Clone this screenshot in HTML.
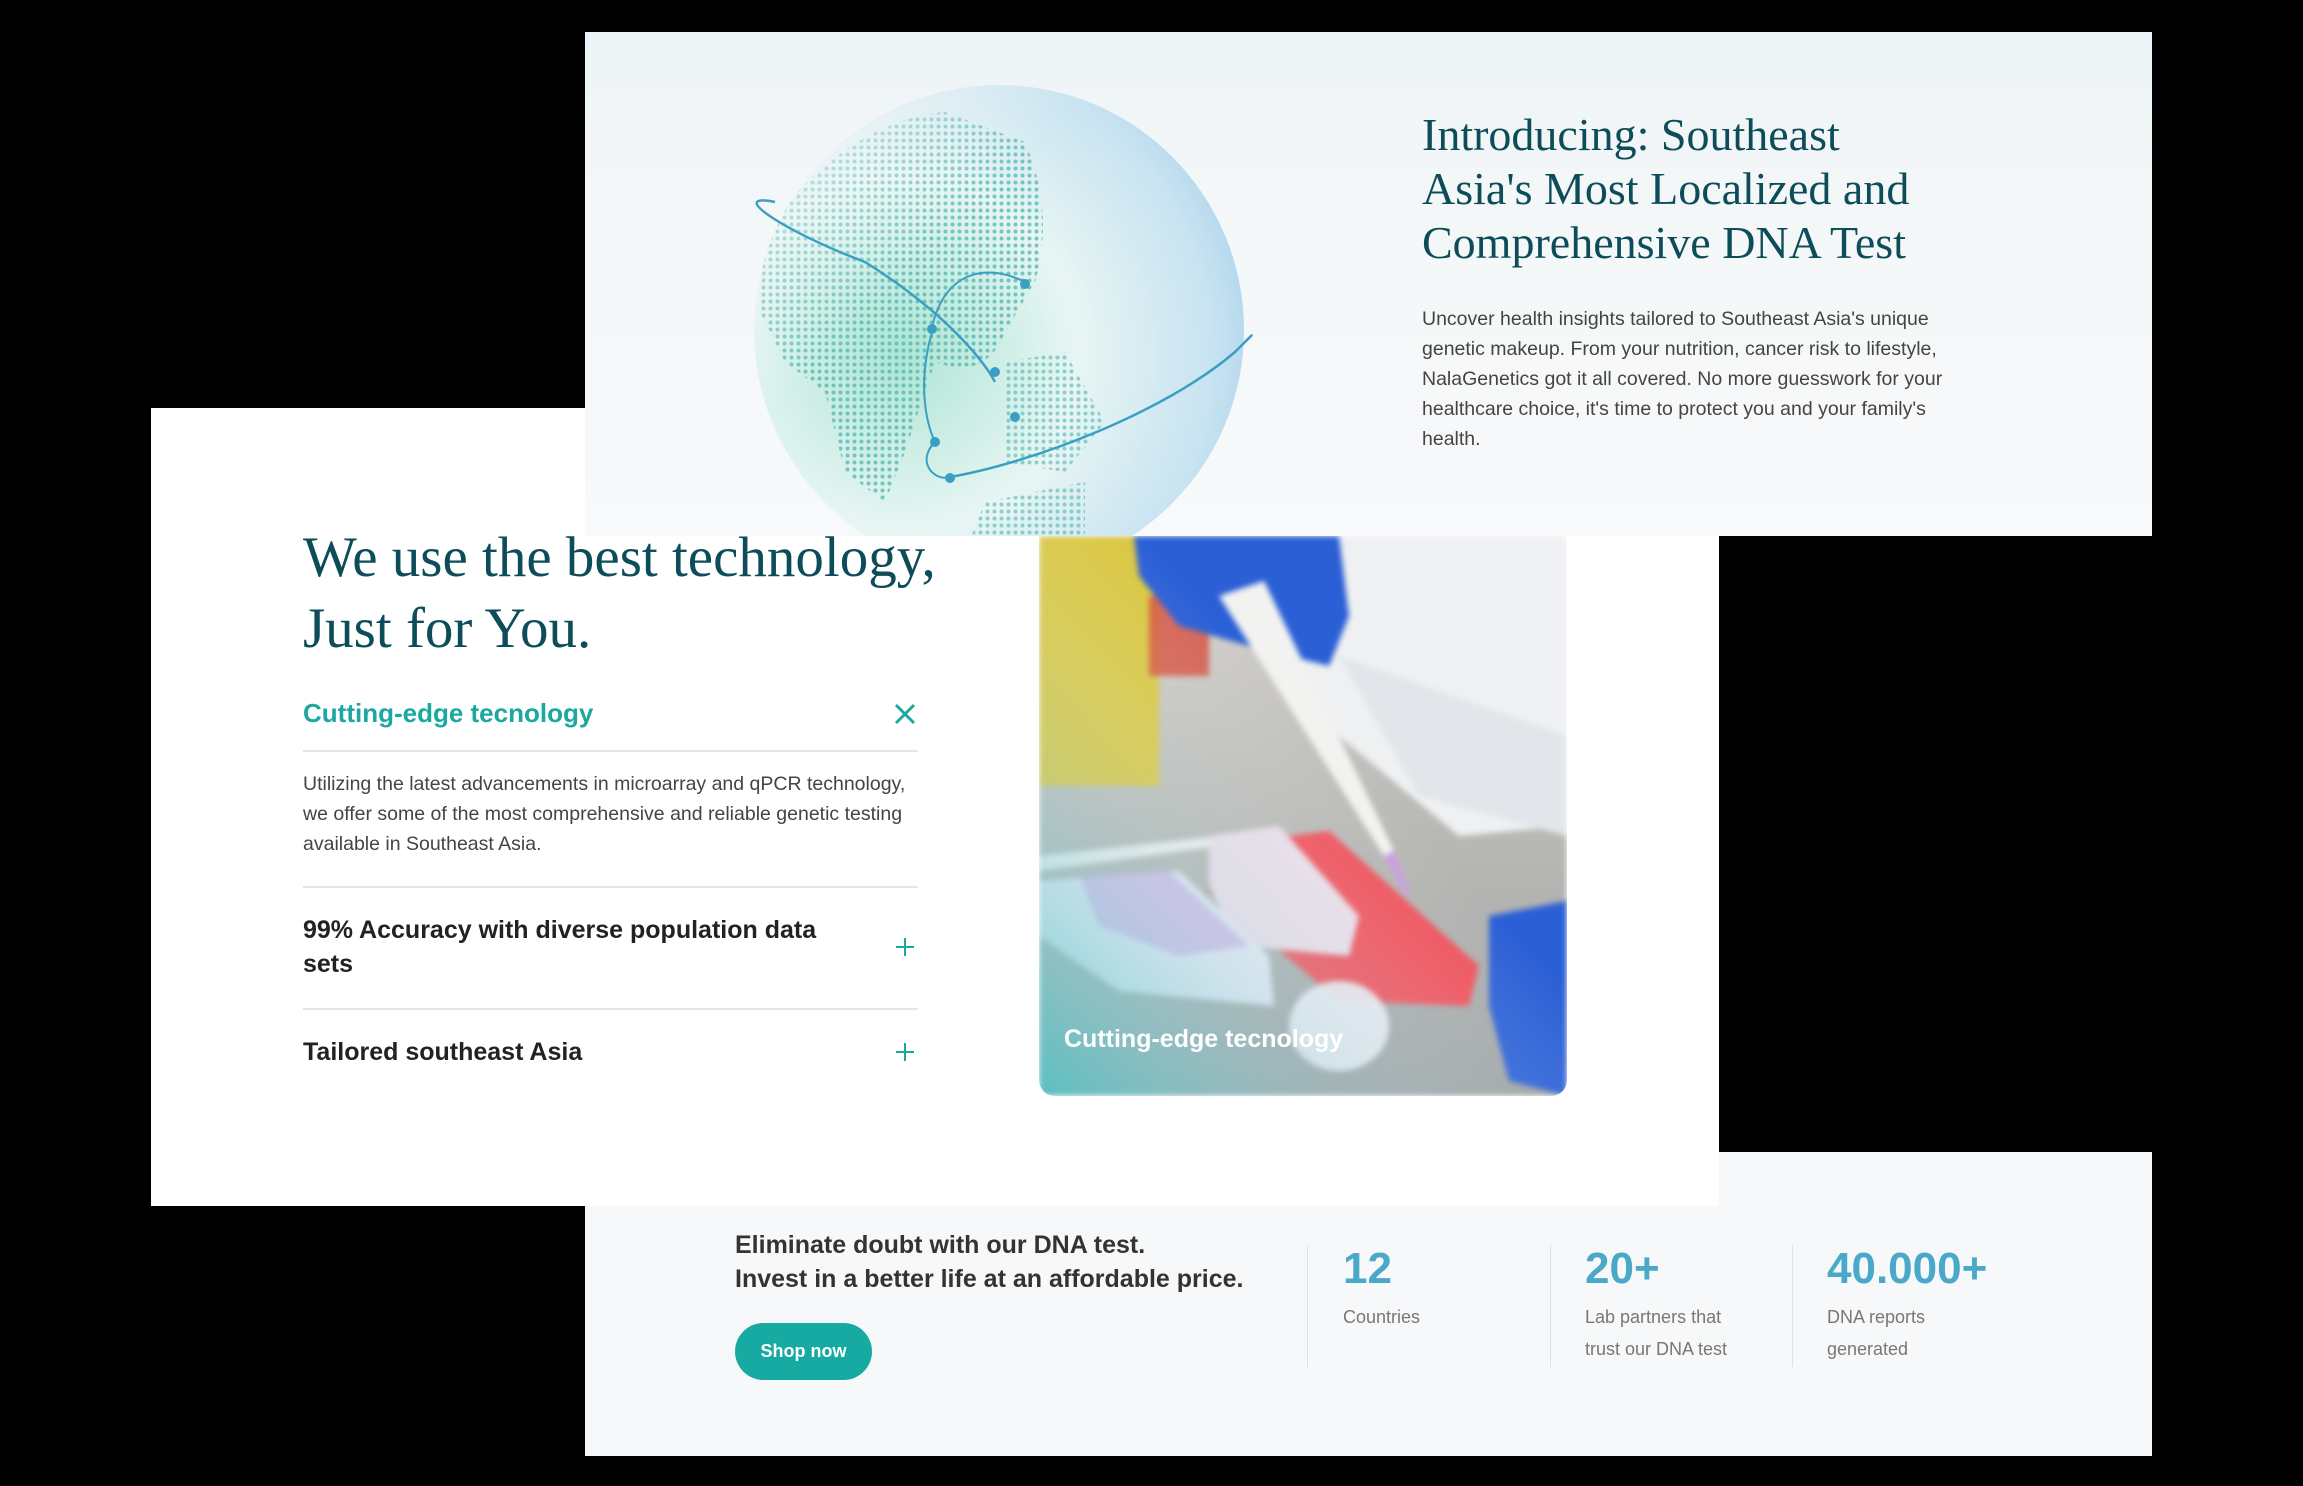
<!DOCTYPE html>
<html><head><meta charset="utf-8"><style>
*{margin:0;padding:0;box-sizing:border-box}
body{width:2303px;height:1486px;background:#000;position:relative;overflow:hidden;font-family:"Liberation Sans",sans-serif}
.abs{position:absolute}
.serif{font-family:"Liberation Serif",serif;color:#0d4d5a}
</style></head><body>
<div class="abs" style="left:585px;top:1152px;width:1567px;height:304px;background:#f6f8f9"></div>
<div class="abs" style="left:585px;top:32px;width:1567px;height:504px;background:linear-gradient(180deg,#edf3f6 0%,#f4f7f8 30%,#f7f9fa 100%);overflow:hidden">
 <svg class="abs" style="left:0;top:0" width="700" height="504">
  <defs>
   <radialGradient id="g1" cx="0.3" cy="0.55" r="0.8">
    <stop offset="0" stop-color="#a6e3d0"/><stop offset="0.45" stop-color="#e6f5f3"/><stop offset="0.8" stop-color="#c2e0f0"/><stop offset="1" stop-color="#96c9e8"/>
   </radialGradient>
   <linearGradient id="fade" x1="0" y1="0" x2="1" y2="1"><stop offset="0" stop-color="#f4f7f8" stop-opacity="0.9"/><stop offset="0.35" stop-color="#f4f7f8" stop-opacity="0"/></linearGradient>
   <pattern id="dots" width="7" height="7" patternUnits="userSpaceOnUse"><circle cx="3.5" cy="3.5" r="2" fill="#4fb8b0"/></pattern>
   <clipPath id="cc"><circle cx="414" cy="298" r="245"/></clipPath>
  </defs>
  <circle cx="414" cy="298" r="245" fill="url(#g1)" opacity="0.9"/>
  <g clip-path="url(#cc)" opacity="0.75">
   <path d="M180 200 Q260 90 360 80 L440 110 Q470 180 450 250 L420 300 Q400 350 350 330 L320 420 L300 470 L260 440 L240 360 L200 330 L175 280 Z" fill="url(#dots)"/>
   <path d="M420 330 L480 320 L520 390 L480 440 L420 430 Z" fill="url(#dots)" opacity="0.8"/>
   <path d="M400 470 L500 450 L500 520 L380 520 Z" fill="url(#dots)" opacity="0.8"/>
  </g>
  <circle cx="414" cy="298" r="246" fill="url(#fade)"/>
  <path d="M190 170 C140 160 200 200 280 230 C360 280 400 330 410 350" stroke="#3b9fc4" stroke-width="2.5" fill="none"/>
  <path d="M347 295 C360 240 400 230 440 250" stroke="#3b9fc4" stroke-width="2" fill="none"/>
  <path d="M347 300 C330 360 345 400 350 410" stroke="#3b9fc4" stroke-width="2" fill="none"/>
  <path d="M365 445 C450 430 580 380 650 320 C670 300 670 300 660 310" stroke="#3b9fc4" stroke-width="2.5" fill="none"/>
  <path d="M350 410 C330 430 350 450 365 445" stroke="#3b9fc4" stroke-width="2" fill="none"/>
  <g fill="#3b9fc4"><circle cx="347" cy="297" r="5"/><circle cx="410" cy="340" r="5"/><circle cx="440" cy="252" r="5"/><circle cx="350" cy="410" r="5"/><circle cx="365" cy="446" r="5"/><circle cx="430" cy="385" r="5"/></g>
 </svg>
 <div class="abs serif" style="left:837px;top:76px;font-size:46px;line-height:54px;width:500px">Introducing: Southeast Asia's Most Localized and Comprehensive DNA Test</div>
 <div class="abs" style="left:837px;top:272px;font-size:19.5px;line-height:30px;width:548px;color:#444">Uncover health insights tailored to Southeast Asia's unique genetic makeup. From your nutrition, cancer risk to lifestyle, NalaGenetics got it all covered. No more guesswork for your healthcare choice, it's time to protect you and your family's health.</div>
</div>
<div class="abs" style="left:151px;top:408px;width:434px;height:798px;background:#fff"></div>
<div class="abs" style="left:585px;top:536px;width:1134px;height:670px;background:#fff"></div>
<div class="abs serif" style="left:303px;top:522px;font-size:57px;line-height:71px;white-space:nowrap">We use the best technology,<br>Just for You.</div>
<div class="abs" style="left:303px;top:698px;font-size:26px;color:#1aa8a0;font-weight:bold">Cutting-edge tecnology</div>
<svg class="abs" style="left:894px;top:703px" width="22" height="22"><path d="M2 2L20 20M20 2L2 20" stroke="#1aa8a0" stroke-width="3"/></svg>
<div class="abs" style="left:303px;top:750px;width:615px;height:2px;background:#e6e6e6"></div>
<div class="abs" style="left:303px;top:769px;width:615px;font-size:19.5px;line-height:30px;color:#444">Utilizing the latest advancements in microarray and qPCR technology, we offer some of the most comprehensive and reliable genetic testing available in Southeast Asia.</div>
<div class="abs" style="left:303px;top:886px;width:615px;height:2px;background:#e6e6e6"></div>
<div class="abs" style="left:303px;top:913px;width:560px;font-size:25px;line-height:34px;color:#222;font-weight:bold">99% Accuracy with diverse population data sets</div>
<svg class="abs" style="left:896px;top:938px" width="18" height="18"><path d="M9 0V18M0 9H18" stroke="#1aa8a0" stroke-width="2"/></svg>
<div class="abs" style="left:303px;top:1008px;width:615px;height:2px;background:#e6e6e6"></div>
<div class="abs" style="left:303px;top:1035px;font-size:25px;line-height:34px;color:#222;font-weight:bold">Tailored southeast Asia</div>
<svg class="abs" style="left:896px;top:1043px" width="18" height="18"><path d="M9 0V18M0 9H18" stroke="#1aa8a0" stroke-width="2"/></svg>
<div class="abs" style="left:1039px;top:536px;width:528px;height:560px;border-radius:0 0 16px 16px;overflow:hidden">
 <svg width="528" height="560" style="filter:blur(3px)">
  <defs>
   <linearGradient id="bg" x1="0" y1="0" x2="0" y2="1"><stop offset="0" stop-color="#d8d6d2"/><stop offset="0.45" stop-color="#bdbcb8"/><stop offset="1" stop-color="#9fa2a3"/></linearGradient>
   <linearGradient id="ov" x1="0" y1="1" x2="0.6" y2="0.4"><stop offset="0" stop-color="#4fc4c6" stop-opacity="0.85"/><stop offset="0.5" stop-color="#a8d8e0" stop-opacity="0.3"/><stop offset="1" stop-color="#fff" stop-opacity="0"/></linearGradient>
  </defs>
  <rect width="528" height="560" fill="url(#bg)"/>
  <rect x="0" y="0" width="120" height="250" fill="#d9c640"/>
  <rect x="110" y="60" width="60" height="80" fill="#d64a38" opacity="0.8"/>
  <path d="M230 0H528V290L420 300 300 200 240 120Z" fill="#eef0f2"/>
  <path d="M300 120 L528 200 V300 L380 260Z" fill="#e2e6ea"/>
  <path d="M95 0H300L310 80 290 130 210 110 140 90 100 40Z" fill="#2b5fd6"/>
  <path d="M180 60 L225 45 L355 315 L345 320Z" fill="#f2f2f0"/>
  <path d="M345 320 L355 315 L372 360 L368 362Z" fill="#c79be0"/>
  <path d="M0 320 L180 300 L180 310 L0 335Z" fill="#eeeeee"/>
  <path d="M170 310 L290 295 L440 430 L430 470 L300 465 L170 355Z" fill="#f0505a"/>
  <path d="M170 300 L240 290 L320 380 L310 420 L200 410 L170 350Z" fill="#eadde8"/>
  <path d="M0 345 L140 335 L230 420 L235 470 L80 455 L0 400Z" fill="#e3e8f2"/>
  <path d="M40 340 L130 335 L210 410 L140 420 L60 390Z" fill="#c6a0e0" opacity="0.6"/>
  <path d="M450 380 L528 365 V560 L470 545 L450 470Z" fill="#2b5fd6"/>
  <ellipse cx="300" cy="490" rx="50" ry="45" fill="#eef0f7" opacity="0.9"/>
  <rect width="528" height="560" fill="url(#ov)"/>
 </svg>
 <div class="abs" style="left:25px;top:489px;color:#fff;font-size:25px;font-weight:bold">Cutting-edge tecnology</div>
</div>
<div class="abs" style="left:735px;top:1228px;font-size:25px;line-height:34px;color:#333;font-weight:bold">Eliminate doubt with our DNA test.<br>Invest in a better life at an affordable price.</div>
<div class="abs" style="left:735px;top:1323px;width:137px;height:57px;border-radius:29px;background:#17aaa3;color:#fff;font-size:18px;font-weight:bold;text-align:center;line-height:57px">Shop now</div>
<div class="abs" style="left:1307px;top:1245px;width:1px;height:122px;background:#dde1e3"></div>
<div class="abs" style="left:1550px;top:1245px;width:1px;height:122px;background:#dde1e3"></div>
<div class="abs" style="left:1792px;top:1245px;width:1px;height:122px;background:#dde1e3"></div>
<div class="abs" style="left:1343px;top:1244px;font-size:44px;font-weight:bold;color:#4aa8c8">12</div>
<div class="abs" style="left:1585px;top:1244px;font-size:44px;font-weight:bold;color:#4aa8c8">20+</div>
<div class="abs" style="left:1827px;top:1244px;font-size:44px;font-weight:bold;color:#4aa8c8">40.000+</div>
<div class="abs" style="left:1343px;top:1301px;font-size:18px;line-height:32px;color:#777">Countries</div>
<div class="abs" style="left:1585px;top:1301px;font-size:18px;line-height:32px;color:#777">Lab partners that<br>trust our DNA test</div>
<div class="abs" style="left:1827px;top:1301px;font-size:18px;line-height:32px;color:#777">DNA reports<br>generated</div>
</body></html>
